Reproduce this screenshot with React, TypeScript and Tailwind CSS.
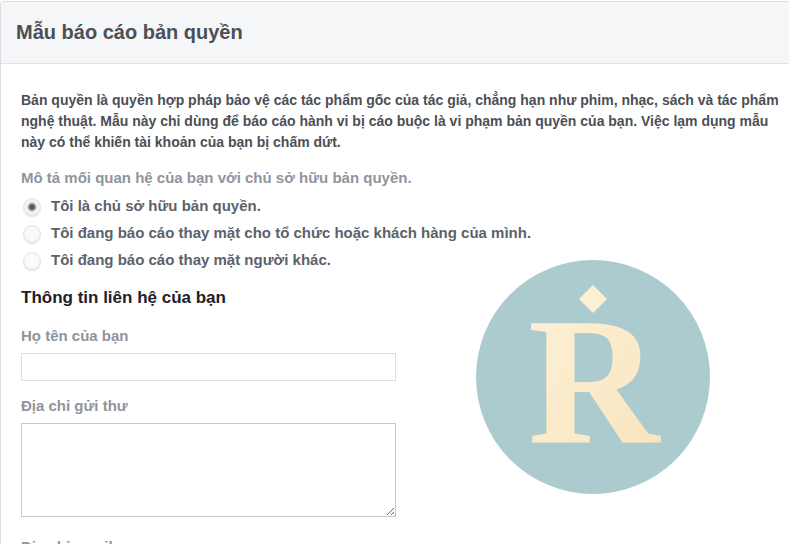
import { useState } from 'react';

const relations = [
  { value: 'owner', label: 'Tôi là chủ sở hữu bản quyền.' },
  { value: 'organization', label: 'Tôi đang báo cáo thay mặt cho tổ chức hoặc khách hàng của mình.' },
  { value: 'other', label: 'Tôi đang báo cáo thay mặt người khác.' },
];

function Emblem() {
  return (
    <svg viewBox="0 0 234 234" className="h-[234px] w-[234px] shrink-0" role="img" aria-label="R">
      <defs>
        <linearGradient id="cream" x1="0" y1="0" x2="1" y2="1">
          <stop offset="0" stopColor="#fdf0d5" />
          <stop offset="0.5" stopColor="#fbebca" />
          <stop offset="1" stopColor="#f8e2bd" />
        </linearGradient>
      </defs>
      <circle cx="117" cy="117" r="117" fill="#abcbce" />
      <path d="M117 25 131 39 117 53 103 39Z" fill="#fdf0d0" />
      <text
        x="52"
        y="183"
        fill="url(#cream)"
        fontFamily="'Liberation Serif', serif"
        fontWeight="700"
        fontSize="182"
      >
        R
      </text>
    </svg>
  );
}

function RelationOptions() {
  const [relation, setRelation] = useState('owner');

  return (
    <fieldset>
      <legend className="text-[15px] leading-5 whitespace-nowrap text-[#90949c]">
        Mô tả mối quan hệ của bạn với chủ sở hữu bản quyền.
      </legend>
      <div className="mt-[5px] flex flex-col">
        {relations.map((item) => (
          <label key={item.value} className="flex h-[27px] items-center gap-2.5 whitespace-nowrap text-[15px] text-[#5b626b]">
            <input
              type="radio"
              name="relation"
              value={item.value}
              checked={relation === item.value}
              onChange={() => setRelation(item.value)}
              className="ml-0.5 h-[18px] w-[18px] shrink-0 appearance-none rounded-full border border-[#e4e4e4] bg-[radial-gradient(circle,#fafafa_50%,#f0f0f0_100%)] shadow-[0_1px_1px_#dcdcdc] checked:bg-[radial-gradient(circle,#55585c_2px,#f3f3f3_5px,#ededed_100%)]"
            />
            {item.label}
          </label>
        ))}
      </div>
    </fieldset>
  );
}

export default function App() {
  return (
    <div className="h-screen overflow-hidden bg-white pt-px font-['Liberation_Sans',Arial,sans-serif] font-bold">
      <main className="min-h-full rounded-tl-sm border-t border-l border-[#dcdee2]">
        <header className="border-b border-[#e1e3e6] bg-[#f5f6f7] px-[15px] pt-4 pb-[17px]">
          <h1 className="text-xl leading-7 text-[#4b4f56]">Mẫu báo cáo bản quyền</h1>
        </header>
        <form className="pt-[26px] pl-5">
          <p className="pr-0.5 text-sm leading-[21px] text-[#4b4f56]">
            Bản quyền là quyền hợp pháp bảo vệ các tác phẩm gốc của tác giả, chẳng hạn như phim, nhạc, sách và tác phẩm
            nghệ thuật. Mẫu này chỉ dùng để báo cáo hành vi bị cáo buộc là vi phạm bản quyền của bạn. Việc lạm dụng mẫu
            này có thể khiến tài khoản của bạn bị chấm dứt.
          </p>
          <div className="mt-[15px] flex">
            <div className="w-[375px] shrink-0">
              <RelationOptions />
              <h2 className="mt-3 text-[17px] leading-6 text-[#1d2129]">Thông tin liên hệ của bạn</h2>
              <div className="mt-4 flex flex-col">
                <label htmlFor="name" className="text-[15px] leading-5 text-[#90949c]">
                  Họ tên của bạn
                </label>
                <input id="name" type="text" className="mt-[7px] h-7 border border-[#dddfe2] px-2 text-sm outline-none" />
                <label htmlFor="address" className="mt-[15px] text-[15px] leading-5 text-[#90949c]">
                  Địa chỉ gửi thư
                </label>
                <textarea id="address" className="mt-[7px] h-[94px] resize border border-[#c8c8c8] px-2 text-sm outline-none" />
                <label htmlFor="email" className="mt-5 text-[15px] leading-5 text-[#90949c]">
                  Địa chỉ email
                </label>
                <input id="email" type="email" className="mt-[7px] h-7 border border-[#dddfe2] px-2 text-sm outline-none" />
              </div>
            </div>
            <div className="flex flex-1 items-start justify-center pt-[92px]">
              <Emblem />
            </div>
          </div>
        </form>
      </main>
    </div>
  );
}
